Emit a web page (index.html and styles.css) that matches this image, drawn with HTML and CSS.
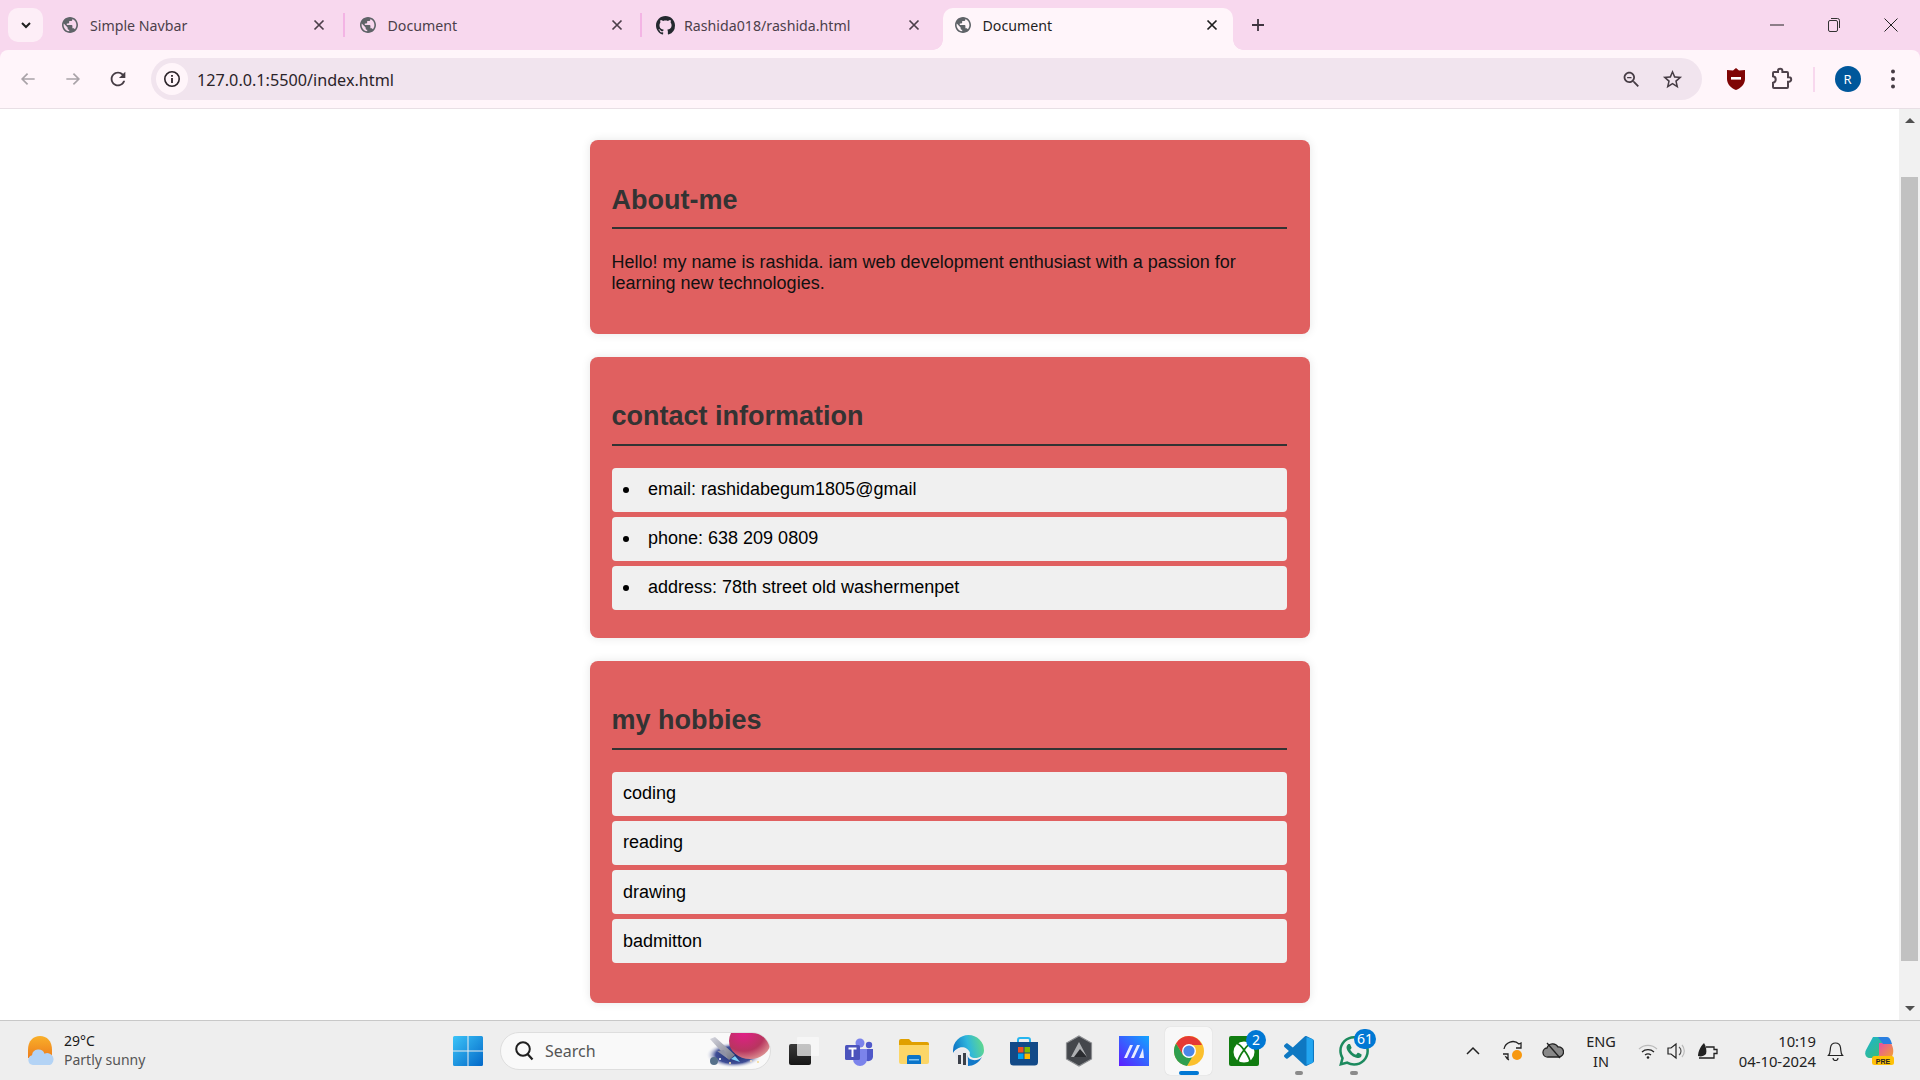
FILE: index.html
```html
<!DOCTYPE html>
<html lang="en">
<head>
<meta charset="utf-8">
<title>Document</title>
<link rel="stylesheet" href="styles.css">
</head>
<body>
<svg class="defs" width="0" height="0">
  <symbol id="globe" viewBox="2 2 20 20"><path d="M12 2C6.480 2 2 6.480 2 12s4.480 10 10 10 10-4.480 10-10S17.520 2 12 2zm-1 17.930c-3.950-.49-7-3.850-7-7.930 0-.62.08-1.210.21-1.790L9 15v1c0 1.100.9 2 2 2v1.930zm6.900-2.540c-.26-.81-1-1.390-1.900-1.390h-1v-3c0-.55-.45-1-1-1H8v-2h2c.55 0 1-.45 1-1V7h2c1.100 0 2-.9 2-2v-.41c2.930 1.190 5 4.060 5 7.410 0 2.080-.8 3.970-2.100 5.390z"/></symbol>
  <symbol id="close" viewBox="0 0 12 12"><path d="M1.500 1.500l9 9M10.500 1.500l-9 9" fill="none" stroke="currentColor" stroke-width="1.700"/></symbol>
</svg>

<header class="tabstrip">
  <button class="tab-search"><svg width="12" height="12" viewBox="0 0 12 12"><path d="M2 4l4 4 4-4" fill="none" stroke="#1f1f1f" stroke-width="2"/></svg></button>
  <div class="tab">
    <svg class="favicon"><use href="#globe"/></svg><span class="tab-title">Simple Navbar</span>
    <svg class="tab-close"><use href="#close"/></svg>
  </div>
  <i class="tab-sep"></i>
  <div class="tab">
    <svg class="favicon"><use href="#globe"/></svg><span class="tab-title">Document</span>
    <svg class="tab-close"><use href="#close"/></svg>
  </div>
  <i class="tab-sep"></i>
  <div class="tab">
    <svg class="favicon github" viewBox="0 0 16 16"><path d="M8 0C3.580 0 0 3.580 0 8c0 3.540 2.290 6.530 5.470 7.590.4.07.55-.17.55-.38 0-.19-.01-.82-.01-1.490-2.010.37-2.530-.49-2.690-.94-.09-.23-.48-.94-.82-1.130-.28-.15-.68-.52-.01-.53.63-.01 1.080.58 1.230.82.72 1.210 1.870.87 2.330.66.07-.52.28-.87.51-1.070-1.780-.2-3.640-.89-3.640-3.950 0-.87.31-1.590.82-2.150-.08-.2-.36-1.020.08-2.120 0 0 .67-.21 2.200.82.64-.18 1.320-.27 2-.27.68 0 1.360.09 2 .27 1.530-1.040 2.200-.82 2.200-.82.44 1.100.16 1.920.08 2.120.51.56.82 1.270.82 2.150 0 3.070-1.870 3.750-3.650 3.950.29.25.54.73.54 1.480 0 1.070-.01 1.930-.01 2.200 0 .21.15.46.55.38A8.013 8.013 0 0016 8c0-4.420-3.580-8-8-8z"/></svg><span class="tab-title">Rashida018/rashida.html</span>
    <svg class="tab-close"><use href="#close"/></svg>
  </div>
  <i class="tab-gap"></i>
  <div class="tab active">
    <svg class="favicon"><use href="#globe"/></svg><span class="tab-title">Document</span>
    <svg class="tab-close"><use href="#close"/></svg>
  </div>
  <button class="new-tab"><svg width="16" height="16" viewBox="0 0 16 16"><path d="M8 2v12M2 8h12" stroke="#3f3540" stroke-width="1.800"/></svg></button>
  <div class="win-controls">
    <button class="win-btn"><svg width="14" height="14" viewBox="0 0 14 14"><path d="M0 7h14" stroke="#222" stroke-width="1"/></svg></button>
    <button class="win-btn"><svg width="14" height="16" viewBox="0 0 14 16"><rect x="1.500" y="3.500" width="9" height="11" rx="1.500" fill="none" stroke="#333"/><path d="M4 1.500h6.500a2 2 0 012 2V11" fill="none" stroke="#333"/></svg></button>
    <button class="win-btn"><svg width="14" height="14" viewBox="0 0 14 14"><path d="M.5.5l13 13M13.500.5l-13 13" stroke="#222" stroke-width="1"/></svg></button>
  </div>
</header>

<nav class="toolbar">
  <button class="tool"><svg width="20" height="20" viewBox="0 0 24 24"><path d="M20 12H5M11.500 5.500L5 12l6.500 6.500" fill="none" stroke="#a9a3a8" stroke-width="2"/></svg></button>
  <button class="tool"><svg width="20" height="20" viewBox="0 0 24 24"><path d="M4 12h15M12.500 5.500L19 12l-6.500 6.500" fill="none" stroke="#a9a3a8" stroke-width="2"/></svg></button>
  <button class="tool"><svg width="22" height="22" viewBox="0 0 24 24" fill="#463c44"><path d="M17.650 6.350C16.200 4.900 14.210 4 12 4c-4.420 0-7.990 3.580-7.990 8s3.570 8 7.990 8c3.730 0 6.840-2.550 7.730-6h-2.080c-.82 2.330-3.040 4-5.650 4-3.310 0-6-2.690-6-6s2.690-6 6-6c1.660 0 3.140.69 4.220 1.780L13 11h7V4l-2.350 2.350z"/></svg></button>
  <div class="omnibox">
    <span class="site-info"><svg width="18" height="18" viewBox="0 0 18 18"><circle cx="9" cy="9" r="7.200" fill="none" stroke="#2b2329" stroke-width="1.600"/><path d="M9 8v5M9 5v1.800" stroke="#2b2329" stroke-width="1.800"/></svg></span>
    <span class="url">127.0.0.1:5500/index.html</span>
    <span class="omni-actions">
      <button class="omni-btn zoom-btn"><svg width="21" height="21" viewBox="0 0 24 24" fill="#463c44"><path d="M15.500 14h-.79l-.28-.27C15.410 12.590 16 11.110 16 9.500 16 5.910 13.090 3 9.500 3S3 5.910 3 9.500 5.910 16 9.500 16c1.610 0 3.090-.59 4.230-1.570l.27.28v.79l5 4.990L20.490 19l-4.990-5zm-6 0C7.010 14 5 11.990 5 9.500S7.010 5 9.500 5 14 7.010 14 9.500 11.990 14 9.500 14zM7 9h5v1.500H7z"/></svg></button>
      <button class="omni-btn"><svg width="23" height="23" viewBox="0 0 24 24" fill="#463c44"><path d="M22 9.240l-7.190-.62L12 2 9.190 8.630 2 9.240l5.460 4.730L5.820 21 12 17.270 18.180 21l-1.630-7.030L22 9.240zM12 15.400l-3.760 2.270 1-4.280-3.320-2.880 4.380-.38L12 6.100l1.710 4.040 4.380.38-3.320 2.880 1 4.280L12 15.400z"/></svg></button>
    </span>
  </div>
  <button class="tool"><svg width="20" height="24" viewBox="0 0 20 24"><path d="M10 1l3 2.500 6-.5v9c0 5-4 9-9 11C5 21 1 17 1 12V3l6 .5z" fill="#7f0505"/><rect x="5" y="10" width="10" height="2.600" fill="#fff"/></svg></button>
  <button class="tool"><svg width="24" height="24" viewBox="0 0 24 24"><path d="M5 5h4V4a2.200 2.200 0 014.400 0v1H18a1 1 0 011 1v4.300h1a2.200 2.200 0 010 4.400h-1V20a1 1 0 01-1 1H5a1 1 0 01-1-1v-4.200a3.300 3.300 0 000-6.500V6a1 1 0 011-1z" fill="none" stroke="#4f434c" stroke-width="2"/></svg></button>
  <i class="tool-sep"></i>
  <button class="tool"><span class="avatar">R</span></button>
  <button class="tool"><svg width="6" height="22" viewBox="0 0 6 22" fill="#463c44"><circle cx="3" cy="3.500" r="2"/><circle cx="3" cy="11" r="2"/><circle cx="3" cy="18.500" r="2"/></svg></button>
</nav>

<div class="viewport">
  <main class="page">
    <section class="card about">
      <h2>About-me</h2>
      <p>Hello! my name is rashida. iam web development enthusiast with a passion for learning new technologies.</p>
    </section>
    <section class="card">
      <h2>contact information</h2>
      <ul class="rows bulleted">
        <li>email: rashidabegum1805@gmail</li>
        <li>phone: 638 209 0809</li>
        <li>address: 78th street old washermenpet</li>
      </ul>
    </section>
    <section class="card">
      <h2>my hobbies</h2>
      <ul class="rows plain">
        <li>coding</li>
        <li>reading</li>
        <li>drawing</li>
        <li>badmitton</li>
      </ul>
    </section>
  </main>
  <aside class="scrollbar">
    <i class="arrow up"></i>
    <div class="track"><div class="thumb"></div></div>
    <i class="arrow down"></i>
  </aside>
</div>

<footer class="taskbar">
  <div class="weather">
    <svg width="30" height="32" viewBox="0 0 30 32">
      <defs><linearGradient id="sun" x1="0" y1="0" x2="0" y2="1"><stop offset="0" stop-color="#f9b02a"/><stop offset="1" stop-color="#ee7d1c"/></linearGradient></defs>
      <path d="M1 15C1 6 6 1 13 1s12 5 12 14v8H1z" fill="url(#sun)"/>
      <path d="M6 30a5 5 0 0 1-1-9.800 6.500 6.500 0 0 1 12.500-1.500A5.800 5.800 0 0 1 23 30z" fill="#b3d3f5"/>
    </svg>
    <div class="weather-text"><span class="temp">29°C</span><span class="cond">Partly sunny</span></div>
  </div>
  <button class="win-start"><svg width="30" height="30" viewBox="0 0 30 30">
    <defs><linearGradient id="winblue" x1="0" y1="0" x2="1" y2="1"><stop offset="0" stop-color="#3cc4f8"/><stop offset="1" stop-color="#0368c8"/></linearGradient></defs>
    <path d="M0 1.500A1.500 1.500 0 011.500 0h13v14.500H0zM15.500 0h13A1.500 1.500 0 0130 1.500v13H15.500zM0 15.500h14.500V30h-13A1.500 1.500 0 010 28.500zM15.500 15.500H30v13a1.500 1.500 0 01-1.500 1.500h-13z" fill="url(#winblue)"/></svg></button>
  <div class="search">
    <svg width="21" height="21" viewBox="0 0 21 21"><circle cx="9" cy="9" r="6.800" fill="none" stroke="#1f1f1f" stroke-width="2"/><path d="M13.500 14l5 5.500" stroke="#1f1f1f" stroke-width="2.200"/></svg>
    <span class="search-label">Search</span>
    <svg class="search-art" width="66" height="36" viewBox="-2 -2 66 36">
      <defs>
        <radialGradient id="art1" cx=".35" cy=".3" r=".8"><stop offset="0" stop-color="#e01f86"/><stop offset=".6" stop-color="#b8355f"/><stop offset="1" stop-color="#e2a09a"/></radialGradient>
        <radialGradient id="art2"><stop offset="0" stop-color="#16276e"/><stop offset=".65" stop-color="#3f4e96"/><stop offset="1" stop-color="#f9f9f9" stop-opacity="0"/></radialGradient>
        <linearGradient id="art3" x1="0" y1="0" x2="1" y2="1"><stop offset="0" stop-color="#d8d8e0"/><stop offset="1" stop-color="#6d7080"/></linearGradient>
      </defs>
      <ellipse cx="28" cy="20" rx="28" ry="13" fill="url(#art2)"/>
      <ellipse cx="44" cy="6" rx="21" ry="18" fill="url(#art1)"/>
      <circle cx="8" cy="26" r="4" fill="#56708a"/>
      <path d="M4 4l5-2 20 18-6 5z" fill="url(#art3)"/>
      <path d="M11 16l7-1 4 9z" fill="#8f92a6"/>
      <path d="M25 24l4-3 5 6z" fill="#7fd0f5"/>
      <circle cx="24" cy="28" r="1" fill="#ffe9b0"/><circle cx="45" cy="26" r="1" fill="#f5e0c0"/><circle cx="52" cy="27" r="1" fill="#f5d890"/><circle cx="14" cy="24" r="1" fill="#fff"/>
    </svg>
  </div>
  <div class="apps">
    <button class="app"><svg width="30" height="30" viewBox="0 0 30 30"><defs><linearGradient id="sq" x1="0" y1="0" x2="0" y2="1"><stop offset="0" stop-color="#3a3a3a"/><stop offset="1" stop-color="#161616"/></linearGradient></defs><rect x="0" y="8" width="22" height="21" rx="2" fill="url(#sq)"/><rect x="8" y="1" width="22" height="19" rx="1" fill="#fafafa" fill-opacity=".72"/></svg></button>
    <button class="app"><svg width="30" height="30" viewBox="0 0 30 30"><circle cx="16" cy="7" r="4.500" fill="#7b83eb"/><circle cx="25" cy="9" r="3.200" fill="#5059c9"/><path d="M20 13h9v8a5 5 0 01-9 2z" fill="#5059c9"/><path d="M9 13h14v10a7 7 0 01-14 0z" fill="#7b83eb"/><rect x="1" y="9" width="15" height="15" rx="1.500" fill="#4b53bc"/><path d="M4.500 12.500h8M8.500 12.500V21" stroke="#fff" stroke-width="2"/></svg></button>
    <button class="app"><svg width="30" height="30" viewBox="0 0 30 30"><path d="M0 5a2 2 0 012-2h8l3 3h15a2 2 0 012 2v5H0z" fill="#e0a000"/><path d="M0 9h30v17a2 2 0 01-2 2H2a2 2 0 01-2-2z" fill="#fcd667"/><path d="M8 21a2 2 0 012-2h10a2 2 0 012 2v7H8z" fill="#0a74c9"/><rect x="10" y="23" width="10" height="1.500" fill="#7cc4f3"/></svg></button>
    <button class="app"><svg width="31" height="31" viewBox="0 0 31 31"><defs><linearGradient id="edge" x1="0" y1=".6" x2="1" y2=".4"><stop offset="0" stop-color="#0c72c4"/><stop offset=".5" stop-color="#2fb6dc"/><stop offset="1" stop-color="#62d98a"/></linearGradient></defs><path d="M0 15.500a15.500 15.500 0 0131 0c0 5.500-5 8-10 7.500-4-.5-5-3-4-5-2-6-9-7-13-4-2 1-3 2-4 4z" fill="url(#edge)"/><path d="M14 20c2 6 10 7 15 2-3 6-9 9-14 9-2-2-2-7-1-11z" fill="#1278c8"/><path d="M1 17c3-3 8-4 12-2 2 2 2 11 2 16C8 31 2 25 1 17z" fill="#e8e8ec"/><path d="M5 20h3v9H5zM10 18h3v12h-3z" fill="#3b4049"/></svg></button>
    <button class="app"><svg width="30" height="30" viewBox="0 0 30 30"><path d="M9 7V4a2 2 0 012-2h8a2 2 0 012 2v3" fill="none" stroke="#26b6f0" stroke-width="2"/><path d="M1 6h28v20a3.500 3.500 0 01-3.500 3.500h-21A3.500 3.500 0 011 26z" fill="#124a88"/><rect x="9" y="11" width="5.500" height="5.500" fill="#f25022"/><rect x="15.500" y="11" width="5.500" height="5.500" fill="#7fba00"/><rect x="9" y="17.500" width="5.500" height="5.500" fill="#00a4ef"/><rect x="15.500" y="17.500" width="5.500" height="5.500" fill="#ffb900"/></svg></button>
    <button class="app"><svg width="30" height="32" viewBox="0 0 30 32"><path d="M15 1l12.500 7v16L15 31 2.500 24V8z" fill="#44474c" stroke="#8b8d90" stroke-width="1.200"/><path d="M15 7l8 15H7z" fill="#aeb0b3"/><path d="M16 14l7 8H10z" fill="#2a2c30"/></svg></button>
    <button class="app"><svg width="30" height="30" viewBox="0 0 30 30"><defs><linearGradient id="ma" x1="0" y1="1" x2="1" y2="0"><stop offset="0" stop-color="#5c1cff"/><stop offset="1" stop-color="#12a5ff"/></linearGradient></defs><rect width="30" height="30" fill="url(#ma)"/><path d="M5 22L11 9h3L8 22zM12 22l6-13h3l-6 13zM20 22l4-10 1 10z" fill="#e9ecff"/></svg></button>
    <button class="app app-active"><svg width="30" height="30" viewBox="0 0 30 30"><circle cx="15" cy="15" r="15" fill="#fbc02d"/><path d="M15 0A15 15 0 002 7.500L9 19 15 9h13A15 15 0 0015 0z" fill="#e53935"/><path d="M2 7.500A15 15 0 0013 29.900L20 18l-5 2.500a6 6 0 01-6-1.500z" fill="#2e9e4f"/><circle cx="15" cy="15" r="7" fill="#fff"/><circle cx="15" cy="15" r="5.600" fill="#4a86e8"/></svg><i class="run-bar active-bar"></i></button>
    <button class="app"><svg width="30" height="30" viewBox="0 0 30 30"><rect width="30" height="30" rx="2" fill="#107c10"/><circle cx="15" cy="16" r="10.500" fill="#fff"/><path d="M7 7c3 1 6 4 8 7 2-3 5-6 8-7M9 25c1-4 3-7 6-11 3 4 5 7 6 11" fill="none" stroke="#107c10" stroke-width="1.800"/></svg><b class="badge badge-2">2</b></button>
    <button class="app"><svg width="30" height="30" viewBox="0 0 100 100"><path d="M70.910 99.320c1.580.61 3.370.57 4.960-.19l20.590-9.910C98.620 88.180 100 85.990 100 83.590V16.410c0-2.400-1.380-4.590-3.540-5.630L75.870.87C73.790-.13 71.340.12 69.510 1.450c-.26.19-.51.4-.74.63L29.360 38.040 12.190 25.010c-1.600-1.210-3.840-1.110-5.320.24l-5.510 5C-.45 31.910-.45 34.760 1.360 36.420L16.250 50 1.360 63.580c-1.810 1.660-1.810 4.510 0 6.170l5.510 5c1.480 1.350 3.720 1.450 5.320.24l17.170-13.030 39.410 35.960c.62.62 1.360 1.090 2.140 1.400zM75.020 27.300L45.110 50l29.910 22.700V27.300z" fill="#0e78c2"/><path d="M75 4v92l21.500-7V11z" fill="#22a5f0"/></svg><i class="run-bar"></i></button>
    <button class="app"><svg width="30" height="30" viewBox="0 0 24 24" fill="#1c8a5e"><path d="M17.472 14.382c-.297-.149-1.758-.867-2.030-.967-.273-.099-.471-.148-.67.15-.197.297-.767.966-.94 1.164-.173.199-.347.223-.644.075-.297-.15-1.255-.463-2.390-1.475-.883-.788-1.480-1.761-1.653-2.059-.173-.297-.018-.458.13-.606.134-.133.298-.347.446-.52.149-.174.198-.298.298-.497.099-.198.05-.371-.025-.52-.075-.149-.669-1.612-.916-2.207-.242-.579-.487-.5-.669-.51-.173-.008-.371-.01-.57-.01-.198 0-.52.074-.792.372-.272.297-1.040 1.016-1.040 2.479 0 1.462 1.065 2.875 1.213 3.074.149.198 2.096 3.200 5.077 4.487.709.306 1.262.489 1.694.625.712.227 1.360.195 1.871.118.571-.085 1.758-.719 2.006-1.413.248-.694.248-1.289.173-1.413-.074-.124-.272-.198-.57-.347m-5.421 7.403h-.004a9.870 9.870 0 01-5.031-1.378l-.361-.214-3.741.982.998-3.648-.235-.374a9.860 9.860 0 01-1.510-5.260c.001-5.450 4.436-9.884 9.888-9.884 2.640 0 5.122 1.030 6.988 2.898a9.825 9.825 0 012.893 6.994c-.003 5.450-4.437 9.884-9.885 9.884m8.413-18.297A11.815 11.815 0 0012.050 0C5.495 0 .16 5.335.157 11.892c0 2.096.547 4.142 1.588 5.945L.057 24l6.305-1.654a11.882 11.882 0 005.683 1.448h.005c6.554 0 11.890-5.335 11.893-11.893a11.821 11.821 0 00-3.480-8.413z"/></svg><b class="badge badge-61">61</b><i class="run-bar"></i></button>
  </div>
  <div class="tray">
    <span class="tray-item w40"><svg width="14" height="9" viewBox="0 0 14 9"><path d="M1 8l6-6 6 6" fill="none" stroke="#222" stroke-width="1.500"/></svg></span>
    <span class="tray-item w40"><svg width="24" height="24" viewBox="0 0 24 24"><path d="M3 10a9 9 0 0115-5l2-1v5h-5" fill="none" stroke="#222" stroke-width="1.300"/><path d="M2 15h5v4l-2-1a7 7 0 003 3" fill="none" stroke="#222" stroke-width="1.300"/><circle cx="16" cy="16" r="5" fill="#f7980f"/></svg></span>
    <span class="tray-item w40"><svg width="22" height="18" viewBox="0 0 22 18"><path d="M6 15a4.500 4.500 0 01-1-9 6 6 0 0111-1 5 5 0 011 10z" fill="#888" stroke="#222" stroke-width="1.300"/><path d="M5 1l13 15" stroke="#222" stroke-width="1.300"/></svg></span>
    <span class="lang"><span>ENG</span><span>IN</span></span>
    <span class="tray-item w28"><svg width="20" height="16" viewBox="0 0 20 16"><path d="M1 6a13 13 0 0118 0" fill="none" stroke="#bbb" stroke-width="1.200"/><path d="M4 9a9 9 0 0112 0M7 12a5 5 0 016 0" fill="none" stroke="#222" stroke-width="1.300"/><circle cx="10" cy="14.500" r="1.300" fill="#222"/></svg></span>
    <span class="tray-item w30"><svg width="20" height="18" viewBox="0 0 20 18"><path d="M1 6h3l5-4v14l-5-4H1z" fill="none" stroke="#222" stroke-width="1.200"/><path d="M12 5a5 5 0 010 8" fill="none" stroke="#555" stroke-width="1.200"/><path d="M15 3a9 9 0 010 12" fill="none" stroke="#bbb" stroke-width="1.200"/></svg></span>
    <span class="tray-item w32"><svg width="22" height="18" viewBox="0 0 22 18"><path d="M1 14c3 1 6 0 8-2 1-3 0-8-2-11C4 4 1 9 1 14z" fill="#222"/><path d="M9 5h8v2.500h3v4h-3V16H2" fill="none" stroke="#222" stroke-width="1.300"/></svg></span>
    <span class="clock"><span>10:19</span><span>04-10-2024</span></span>
    <span class="tray-item w38"><svg width="17" height="20" viewBox="0 0 17 20"><path d="M1.500 14.500c2-2 1.500-5 2-8 .4-2.500 2.500-4.500 5-4.500s4.600 2 5 4.500c.5 3 0 6 2 8z" fill="none" stroke="#222" stroke-width="1.200"/><path d="M6 17a2.500 2.500 0 005 0" fill="none" stroke="#222" stroke-width="1.200"/></svg></span>
    <span class="tray-item w52"><svg width="30" height="30" viewBox="0 0 30 30"><defs><linearGradient id="cop1" x1="0" y1="0" x2="1" y2="1"><stop offset="0" stop-color="#19b3d6"/><stop offset="1" stop-color="#3fbf6a"/></linearGradient><linearGradient id="cop2" x1="0" y1="0" x2="1" y2="1"><stop offset="0" stop-color="#e64ea8"/><stop offset="1" stop-color="#f4a42c"/></linearGradient></defs><path d="M8 1h12l-7 21H5C1 22-1 18 1 14z" fill="url(#cop1)"/><path d="M14 7h12c3 6 3 11 0 15H14z" fill="url(#cop2)"/><path d="M13 1h9c2 0 3 2 4 4l1 3h-9z" fill="#2a7fe0"/><rect x="7" y="20" width="22" height="9" rx="2.500" fill="#ffc107"/><text class="pre" x="18" y="27.500" text-anchor="middle">PRE</text></svg></span>
  </div>
</footer>
</body>
</html>
```

FILE: styles.css
```css
* { box-sizing: border-box; }
html, body { margin: 0; height: 100%; }
body {
  display: flex;
  flex-direction: column;
  height: 100vh;
  overflow: hidden;
  font-family: "Liberation Sans", Arial, sans-serif;
  background: #f8d8ee;
}
button { border: 0; padding: 0; background: none; font: inherit; }
.defs { position: absolute; }

/* tab strip */
.tabstrip {
  flex: 0 0 50px;
  display: flex;
  align-items: flex-end;
  background: #f8d8ee;
  padding-left: 8px;
  font-family: "Noto Sans", sans-serif;
}
.tab-search {
  width: 35px;
  height: 34px;
  margin: 0 7px 8px 0;
  border-radius: 10px;
  background: #fdeef7;
  display: flex;
  align-items: center;
  justify-content: center;
}
.tab {
  flex: 0 0 290px;
  height: 42px;
  display: flex;
  align-items: center;
  padding: 0 12px 8px 12px;
  position: relative;
  z-index: 1;
  color: #4c3f4a;
  font-size: 14.200px;
}
.tab.active {
  background: #fff5fa;
  border-radius: 10px 10px 0 0;
  color: #1f1f1f;
}
.tab.active::before, .tab.active::after {
  content: "";
  position: absolute;
  bottom: 0;
  width: 10px;
  height: 10px;
}
.tab.active::before { left: -10px; background: radial-gradient(circle at 0 0, transparent 9.500px, #fff5fa 10px); }
.tab.active::after { right: -10px; background: radial-gradient(circle at 100% 0, transparent 9.500px, #fff5fa 10px); }
.favicon { width: 16px; height: 16px; fill: #5f6368; flex: none; margin-right: 12px; }
.github { width: 19px; height: 19px; margin: 0 9px 0 -1px; fill: #24292f; }
.tab-title { flex: 1; white-space: nowrap; }
.tab-close { width: 12px; height: 12px; flex: none; color: #4c3f4a; margin-right: 3px; }
.tab.active .tab-close { color: #1f1f1f; }
.tab-sep { flex: 0 0 2px; height: 24px; margin: 0 2.750px 13px; background: #f3b4e4; }
.tab-gap { flex: 0 0 7.500px; }
.new-tab { width: 32px; height: 32px; margin: 0 0 9px 9px; display: flex; align-items: center; justify-content: center; }
.win-controls { margin-left: auto; margin-right: 1px; align-self: stretch; display: flex; }
.win-btn { width: 57px; height: 50px; display: flex; align-items: center; justify-content: center; }

/* toolbar */
.toolbar {
  flex: 0 0 59px;
  display: flex;
  align-items: center;
  background: #fff5fa;
  border-bottom: 1px solid #e8dfe5;
  border-radius: 8px 8px 0 0;
  padding: 0 5px;
}
.tool { flex: 0 0 45px; height: 42px; display: flex; align-items: center; justify-content: center; }
.omnibox {
  flex: 1;
  height: 42px;
  margin: 0 11px 0 11px;
  padding: 0 9px 0 5px;
  background: #f1e4ee;
  border-radius: 21px;
  display: flex;
  align-items: center;
}
.site-info {
  width: 32px;
  height: 32px;
  border-radius: 50%;
  background: #fff5fa;
  display: flex;
  align-items: center;
  justify-content: center;
}
.url { margin: 1px 0 0 9px; font: 16.200px "Noto Sans", sans-serif; color: #2b2329; }
.omni-actions { margin-left: auto; display: flex; }
.omni-btn { width: 42px; height: 42px; display: flex; align-items: center; justify-content: center; }
.zoom-btn { padding-left: 2px; }
.tool-sep { flex: 0 0 2px; height: 25px; margin: 0 10px; background: #f8d8ee; }
.avatar {
  width: 26px;
  height: 26px;
  border-radius: 50%;
  background: #00579b;
  color: #fff;
  font: 13px "Noto Sans", sans-serif;
  display: flex;
  align-items: center;
  justify-content: center;
}

/* page */
.viewport { flex: 1; display: flex; min-height: 0; background: #fff; }
.page { flex: 1; padding-top: 31px; overflow: hidden; }
.card {
  width: 720px;
  margin: 0 auto 22.500px;
  padding: 22px 23px 19px 22px;
  background: #e06060;
  border-radius: 8px;
  box-shadow: 0 0 10px rgba(0, 0, 0, .1);
}
.card h2 {
  margin: 21px 0 22px;
  padding-bottom: 12px;
  border-bottom: 2px solid #333;
  font-size: 27px;
  line-height: 32px;
  color: #333;
}
.about h2 { margin: 22px 0 23px; padding-bottom: 11px; }
.card p { margin: 0 0 21px; padding-right: 39px; font-size: 18px; line-height: 21px; color: #111; }
.rows { list-style: none; margin: 0; padding: 0; display: flex; flex-direction: column; gap: 5px; }
.rows li {
  padding: 11.600px 11.500px;
  background: #f0f0f0;
  border-radius: 4px;
  font-size: 18px;
  line-height: 21px;
  color: #000;
}
.bulleted { margin-bottom: 9px; }
.plain { margin-bottom: 21px; }
.bulleted li { display: flex; align-items: center; padding-left: 11.500px; }
.bulleted li::before {
  content: "";
  width: 6px;
  height: 6px;
  border-radius: 50%;
  background: #000;
  margin: 1px 19px 0 0;
}

/* scrollbar */
.scrollbar { flex: 0 0 21px; display: flex; flex-direction: column; background: #f1f1f1; }
.arrow { flex: 0 0 23px; display: flex; align-items: center; justify-content: center; }
.arrow::before { content: ""; border-left: 5px solid transparent; border-right: 5px solid transparent; }
.arrow.up::before { border-bottom: 5px solid #505050; }
.arrow.down::before { border-top: 5px solid #505050; }
.track { flex: 1; padding: 45px 2px 36px; display: flex; }
.thumb { flex: 1; background: #c1c1c1; }

/* taskbar */
.taskbar {
  flex: 0 0 60px;
  display: flex;
  align-items: center;
  background: #eeeeee;
  border-top: 1px solid #c8c8c8;
  font-family: "Noto Sans", sans-serif;
}
.weather { flex: 0 0 445px; display: flex; align-items: center; padding-left: 27px; gap: 7px; }
.weather-text { display: flex; flex-direction: column; font-size: 14px; line-height: 19px; margin-top: -1px; }
.temp { color: #1a1a1a; }
.cond { color: #555; }
.win-start { flex: 0 0 45px; height: 48px; display: flex; align-items: center; justify-content: center; }
.search {
  flex: 0 0 271px;
  margin-left: 10px;
  height: 38px;
  padding: 0 0 0 13px;
  display: flex;
  align-items: center;
  gap: 10px;
  background: #f9f9f9;
  border: 1px solid #dedede;
  border-radius: 19px;
  overflow: hidden;
}
.search-label { flex: 1; font-size: 16px; color: #555; }
.search-art { flex: none; }
.apps { display: flex; gap: 8px; margin-left: 9px; }
.app { position: relative; flex: 0 0 47px; height: 48px; display: flex; align-items: center; justify-content: center; }
.app-active { background: #f8f8f8; border-radius: 5px; box-shadow: 0 0 1px rgba(0, 0, 0, .2); }
.run-bar {
  position: absolute;
  left: 50%;
  bottom: 0;
  width: 8px;
  height: 4px;
  margin-left: -4px;
  border-radius: 2px;
  background: #8a8a8a;
}
.active-bar { width: 20px; margin-left: -10px; background: #0078d4; }
.badge {
  position: absolute;
  height: 20px;
  min-width: 20px;
  padding: 0 3px;
  border-radius: 10px;
  background: #0078d4;
  color: #fff;
  font-size: 14px;
  font-weight: 400;
  line-height: 20px;
  text-align: center;
}
.badge-2 { top: 3px; left: 26px; }
.badge-61 { top: 2px; left: 24px; }
.tray { margin-left: auto; display: flex; align-items: center; margin-right: 14px; }
.tray-item { display: flex; align-items: center; justify-content: center; }
.w40 { width: 40px; }
.w28 { width: 28px; margin-left: 5px; }
.w30 { width: 30px; }
.w32 { width: 32px; }
.w38 { width: 38px; }
.w52 { width: 52px; }
.lang { width: 56px; display: flex; flex-direction: column; align-items: center; font-size: 14.500px; line-height: 20px; color: #222; }
.clock { width: 92px; display: flex; flex-direction: column; align-items: flex-end; font-size: 14.800px; line-height: 20px; color: #222; white-space: nowrap; }
.pre { font: 700 7px "Liberation Sans", sans-serif; fill: #222; }
```
